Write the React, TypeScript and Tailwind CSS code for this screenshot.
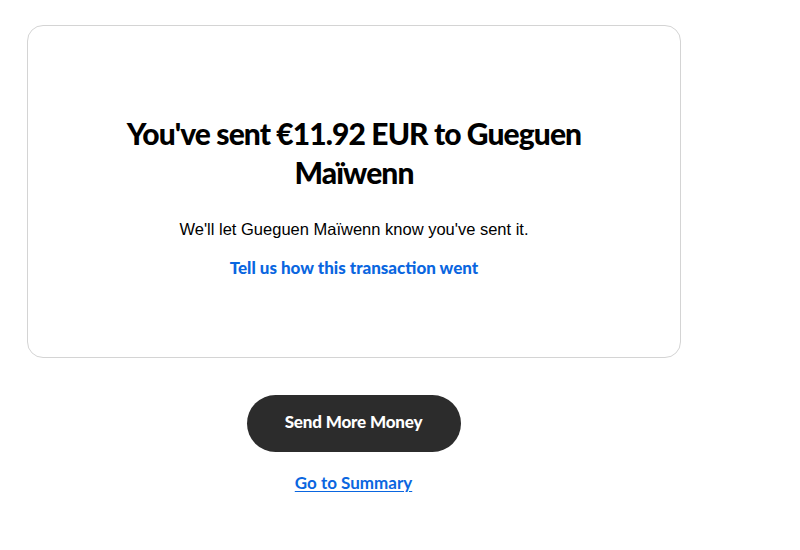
import React from "react";

export default function App() {
  return (
    <div className="w-[800px] h-[550px] bg-white overflow-hidden" style={{ fontFamily: "Lato, 'Liberation Sans', sans-serif" }}>
      <div className="ml-[27px] mt-[25px] w-[654px] h-[333px] border border-[#d4d4d4] rounded-[16px] flex flex-col items-center pt-[88px]">
        <h1 className="w-[480px] text-center text-[30px] leading-[39px] font-black text-black tracking-[-0.03em]">
          You've sent €11.92 EUR to Gueguen Maïwenn
        </h1>
        <p className="mt-[25px] text-[16.5px] leading-[24px] text-black" style={{ fontFamily: "'Liberation Sans', Arial, sans-serif" }}>
          We'll let Gueguen Maïwenn know you've sent it.
        </p>
        <a className="mt-[15px] text-[17px] leading-[24px] font-black text-[#0a66e0] cursor-pointer">
          Tell us how this transaction went
        </a>
      </div>
      <div className="w-[707px] flex flex-col items-center">
        <button className="mt-[37px] w-[214px] h-[57px] rounded-full bg-[#2c2c2c] text-white text-[17px] leading-[24px] pb-[3px] font-black tracking-[-0.01em]">
          Send More Money
        </button>
        <a className="mt-[19px] text-[17px] leading-[24px] font-bold text-[#0a66e0] underline underline-offset-2 cursor-pointer">
          Go to Summary
        </a>
      </div>
    </div>
  );
}
